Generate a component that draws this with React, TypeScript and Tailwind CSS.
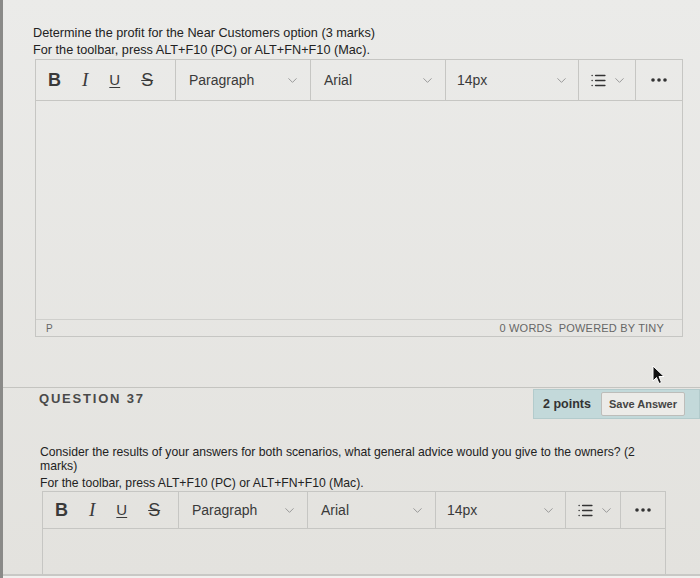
import { ChevronDown, List } from "lucide-react"

const font = { fontFamily: '"Liberation Sans", Arial, sans-serif' }

function Chevron() {
  return <ChevronDown size={15} strokeWidth={1.5} className="text-[#949494]" />
}

function Dots() {
  return (
    <svg width="16" height="4" viewBox="0 0 16 4">
      <circle cx="2" cy="2" r="1.8" fill="#333" />
      <circle cx="8" cy="2" r="1.8" fill="#333" />
      <circle cx="14" cy="2" r="1.8" fill="#333" />
    </svg>
  )
}

interface ToolbarProps {
  height: string
  widths: string[]
}

function Toolbar({ height, widths }: ToolbarProps) {
  return (
    <div className={`flex ${height} border-b border-[#c6c6c3] text-[#3a3a3a]`}>
      <div className={`${widths[0]} flex items-center gap-[21px] pl-[12px] border-r border-[#c6c6c3]`}>
        <span className="text-[18px] font-bold">B</span>
        <span className="text-[19px] italic" style={{ fontFamily: '"Liberation Serif", serif' }}>I</span>
        <span className="text-[15px] underline underline-offset-2">U</span>
        <span className="text-[18px] line-through">S</span>
      </div>
      <div className={`${widths[1]} flex items-center justify-between pl-[13px] pr-[10px] border-r border-[#c6c6c3] text-[14px]`}>
        <span>Paragraph</span>
        <Chevron />
      </div>
      <div className={`${widths[2]} flex items-center justify-between pl-[13px] pr-[10px] border-r border-[#c6c6c3] text-[14px]`}>
        <span>Arial</span>
        <Chevron />
      </div>
      <div className={`${widths[3]} flex items-center justify-between pl-[11px] pr-[9px] border-r border-[#c6c6c3] text-[14px]`}>
        <span>14px</span>
        <Chevron />
      </div>
      <div className={`${widths[4]} flex items-center gap-[5px] pl-[11px] border-r border-[#c6c6c3]`}>
        <List size={17} strokeWidth={2.2} className="text-[#333]" />
        <Chevron />
      </div>
      <div className="flex-1 flex items-center justify-center">
        <Dots />
      </div>
    </div>
  )
}

export default function App() {
  return (
    <div
      className="w-[700px] h-[578px] overflow-hidden flex flex-col border-l-[3px] border-[#8a8a88] bg-gradient-to-b from-[#ebebe9] to-[#e3e2de] text-[#222]"
      style={font}
    >
      <div className="pl-[30px] pt-[25px] text-[12.7px] leading-[17px]">
        <p>Determine the profit for the Near Customers option (3 marks)</p>
        <p>For the toolbar, press ALT+F10 (PC) or ALT+FN+F10 (Mac).</p>
      </div>

      <div className="ml-[32px] w-[648px] border border-[#c6c6c3]">
        <Toolbar height="h-[41px]" widths={["w-[140px]", "w-[135px]", "w-[135px]", "w-[133px]", "w-[57px]"]} />
        <div className="h-[219px] border-b border-[#cfcfcc]" />
        <div className="h-[16px] flex items-center justify-between pl-[10px] pr-[18px] text-[#666]">
          <span className="text-[10px]">P</span>
          <span className="text-[11px] tracking-[0.2px]">0 WORDS&nbsp;&nbsp;POWERED BY TINY</span>
        </div>
      </div>

      <div className="relative h-[50px]">
        <svg className="absolute left-[648px] top-[28px]" width="14" height="20" viewBox="0 0 14 20">
          <path d="M2 1 L2 16 L5.5 12.5 L8 18.5 L10.5 17.5 L8 11.5 L13 11.5 Z" fill="#111" stroke="#fff" strokeWidth="1" />
        </svg>
      </div>

      <div className="border-t border-[#c4c4c0] flex items-start justify-between h-[31px]">
        <span className="pl-[36px] pt-[1px] text-[13px] font-bold tracking-[1.8px] text-[#4a4a4a]">QUESTION 37</span>
        <div className="mt-[1px] h-[30px] w-[167px] bg-[#c3d9da] border border-[#b3cbcc] flex items-center pl-[9px] gap-[10px]">
          <span className="text-[12.5px] font-bold text-[#333]">2 points</span>
          <span className="h-[24px] px-[7px] flex items-center bg-[#ecebe8] border border-[#bdbdba] rounded-[2px] text-[11px] font-bold text-[#444]">
            Save Answer
          </span>
        </div>
      </div>

      <div className="pl-[37px] pt-[27px] text-[12.2px] text-[#222]">
        <p className="leading-[14px]">
          Consider the results of your answers for both scenarios, what general advice would you give to the owners? (2
          <br />
          marks)
        </p>
        <p className="mt-[3px] leading-[15px]">For the toolbar, press ALT+F10 (PC) or ALT+FN+F10 (Mac).</p>
      </div>

      <div className="ml-[39px] w-[624px] h-[83px] border border-[#c6c6c3] border-b-0">
        <Toolbar height="h-[37px]" widths={["w-[136px]", "w-[129px]", "w-[128px]", "w-[130px]", "w-[55px]"]} />
      </div>
      <div className="h-[2px] bg-[#c8c8c5]" />
      <div className="flex-1 bg-[#f1f1ef]" />
    </div>
  )
}
